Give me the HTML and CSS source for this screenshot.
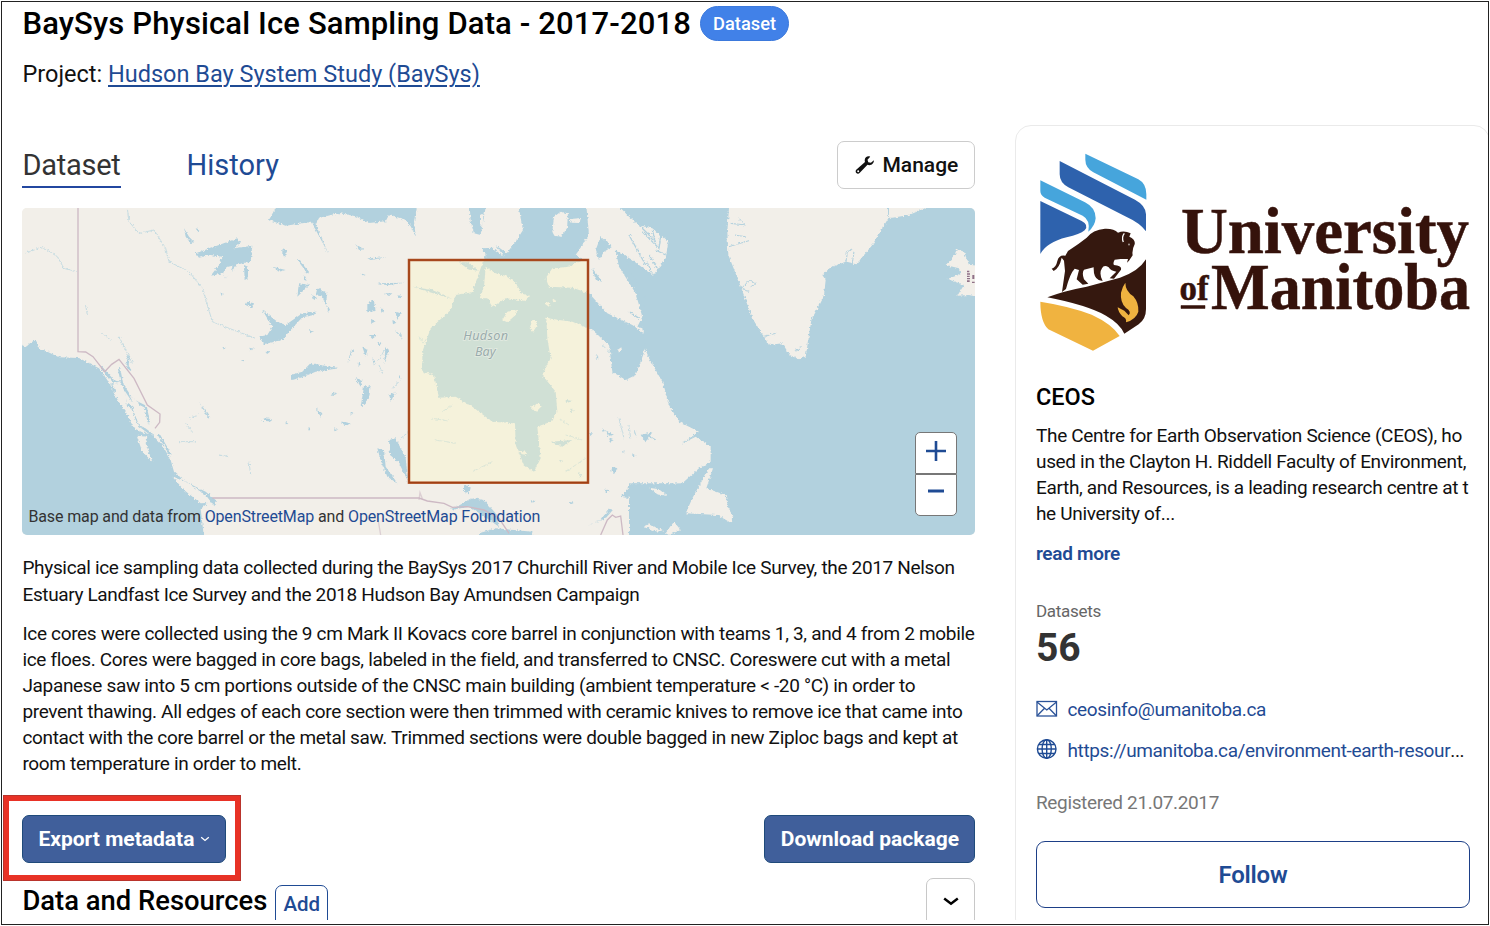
FILE: index.html
```html
<!DOCTYPE html>
<html lang="en">
<head>
<meta charset="utf-8">
<title>BaySys Physical Ice Sampling Data</title>
<link rel="stylesheet" href="styles.css">
</head>
<body>
<div class="frame">
  <div class="viewport">
    <main class="main">
      <div class="title-row">
        <h1>BaySys Physical Ice Sampling Data - 2017-2018</h1>
        <span class="badge">Dataset</span>
      </div>
      <div class="project">Project: <a href="#">Hudson Bay System Study (BaySys)</a></div>
      <div class="tabs">
        <a class="tab active" href="#">Dataset</a>
        <a class="tab" href="#">History</a>
        <button class="btn manage">
          <svg width="20" height="20" viewBox="0 0 20 20"><path d="M18.900 5.200l-3 2.600-2.600-.6-.8-2.500 2.700-3C12.600.6 9.800 2.400 9.700 5.200c0 .7.1 1.300.300 1.800L1.500 14.400c-1.100 1-1.100 2.500-.2 3.500s2.500 1 3.500-.1l7.700-8c3 1.300 6.600-1 6.400-4.600zM3.200 17.200a1 1 0 1 1 0-2 1 1 0 0 1 0 2z" fill="#111" fill-rule="evenodd"/></svg>
          <span>Manage</span>
        </button>
      </div>
      <div class="map">
        <svg class="map-art" viewBox="9 9 2859 981" preserveAspectRatio="none">
          <defs>
            <filter id="coast" x="0" y="0" width="100%" height="100%">
              <feTurbulence type="fractalNoise" baseFrequency="0.14" numOctaves="3" seed="4"/>
              <feDisplacementMap in="SourceGraphic" scale="11" xChannelSelector="R" yChannelSelector="G"/>
            </filter>
          </defs>
          <rect width="2880" height="1000" fill="#f2efe9"/>
          <g filter="url(#coast)">
            <rect x="-60" y="-60" width="3000" height="1120" fill="#f2efe9"/>
            <g class="water">
              <!-- Pacific coast -->
              <path d="M-40 400L20 425 50 403 60 430 85 440 120 457 180 459 205 472 240 490 265 525 285 565 300 592 320 620 345 670 370 682 400 690 430 720 455 765 465 800 500 830 560 860 590 885 590 905 570 890 545 912 560 1040H-40Z"/>
              <path class="inlet" d="M245 485l40 45 25 5 10 60 20 15 20 50 40 30M300 490l10 50 30 45 40 20 10 50M330 450l-5 35 12 10M420 690l35 60M285 560l-5-25"/>
              <!-- Great Bear, Great Slave, Athabasca and northern lakes -->
              <path d="M530 145L600 120 655 100 665 113 645 130 700 122 695 170 655 178 620 220 612 205 575 212 600 180 610 155 575 150 540 158Z"/>
              <path d="M730 315L775 350 800 360 850 325 890 320 885 330 850 337 810 380 790 405 735 418 720 395 745 390 760 365Z"/>
              <path d="M815 510L850 500 875 474 905 480 960 490 890 500 850 517 820 525Z"/>
              <path d="M750 45L785 -20H905L900 38 870 52 800 62Z"/>
              <path d="M870 -20h330l-15 69 5 45-15-30-15-20-50-15-10 20-50 5-40-20-50-10-60 15-10 20 40 90-40-75-25-40Z"/>
              <path d="M495 70l15 25 15 15-10 5-15-20ZM675 180l12 5v35l-10 5ZM685 290l20 5-5 15-20-10ZM790 130l15 5-5 20-10-5ZM735 640l25 3-10 6-20-2ZM540 590l35 50-10-5ZM835 160l35 40-5 5-30-40ZM895 250l30 15-5 35-10-25-20-5ZM840 235l30 5-35 35ZM940 560l15 5-20 8ZM890 610l20 15-5 10ZM760 185l40 10-20 5ZM865 665l10 5-5 8ZM610 425l10 3-5 6ZM605 262l10 5-8 5ZM690 428l15 3-8 6ZM665 465h14l-6 4ZM870 375l15 5-12 5ZM855 210l8 18-8-4ZM880 270l15 10-10 5ZM925 300l8 14-6 6ZM945 670l10 5-8 4ZM970 650l25 5-15 8ZM800 650l8 6-8 2ZM740 440l12 2-8 5ZM530 70l10 3-5 6Z"/>
            </g>
            <g class="river">
              <path d="M325 10l5 40 30 35 45-10 35 55 10 40 60 30 40 50 30 100 50 20 80 30M20 145l50-20 45 30 20 35 35 10M300 395l10 20 30 60M500 655l20 25M480 710h50M690 770l5 40M600 750l30 5M510 640l30-10M200 300l5 30M250 385l25 20"/>
            </g>
            <g class="water" transform="translate(960 0)">
              <!-- Arctic channels and Foxe Basin -->
              <path d="M390 -20H445L425 90 405 85 395 50Z"/>
              <path d="M535 -20H740L750 90 710 150 735 165 690 185 640 190 620 220 630 245 700 248 750 265 805 325 880 360 915 385 920 430 890 510 860 525 820 500 810 420 760 375 700 350 660 345 622 338 625 400 635 460 610 510 650 560 655 620 635 650 595 665 605 760 585 800 555 780 530 720 528 655 460 650 400 605 350 575 300 578 285 510 250 500 250 440 275 370 335 315 350 270 400 262 425 190 440 150 428 130 460 128 495 155 530 110 552 75 545 40Z"/>
              <path d="M360 172h25l35 25-30-3ZM220 245l60 10 60 27-60-18ZM785 95l35 30-25 15-15 25-10-30ZM830 135l50 30 60 45-15 30 5 60-20 70-15-5 15-30-20-70-50-80ZM760 190l30 40-20-5ZM470 120l40 30-15 5Z"/>
              <!-- Winnipeg and western lakes -->
              <path d="M150 705l20-5 30 60 8 70-30-60-25-20ZM115 730l20 5 5 50 35 50-30-20-20-50ZM75 545l20-5-5 40-25 25ZM50 520l20 5-5 20ZM85 295l20-8 5 30-25 5ZM170 320l15 5-10 20ZM140 425l10 10-15 40ZM150 570l20-10-15 30ZM85 160l60-3-50 8ZM115 235l80-2-50 8ZM70 425l15 10-5 20ZM35 440l10-10-20 45ZM135 265h25l-10 8ZM10 650l20 5-15 8ZM50 118l25 15-15 2ZM375 840l20 5-5 20-15-5ZM90 390h25l-15 12ZM185 380l5 25-7-12ZM65 205l15 5-10 4ZM125 305l10 12-8 6ZM100 460l10 10-5 12ZM175 270l15 4-8 6ZM115 410l15 5-10 6ZM60 470l6 12-8 3ZM160 345l12 8-10 5ZM35 620l8 6-8 3ZM95 345l15 4-12 6ZM180 510l8 8-8 3Z"/>
              <!-- Great Lakes -->
              <path d="M335 915l65-35 35 5 35 40 10 40-50-35-40-25ZM420 985l50-15 110 10-5 55H420Z"/>
              <!-- Quebec and Labrador lakes -->
              <path d="M635 710l65-5-30 20ZM695 610l10 8-12 4ZM905 690l35-8-20 30ZM800 675l22 15-15 3ZM820 785l15 5-10 18-8-10ZM880 745l10 8-10 2ZM750 685h12l-8 8ZM660 765l15 3-10 4ZM770 450l12 8-8 3ZM680 585l22 3-20 6ZM800 850l12 10-12 2ZM885 670l8 25-7-10ZM720 800l10 15-8 3ZM690 890l15 4-10 4ZM810 700l14 6-10 4ZM790 670l8 8-8 2ZM850 735l8 6-8 2ZM575 885l16 3-10 5Z"/>
              <!-- Gulf of St Lawrence -->
              <path d="M740 965L785 945 820 900 870 850 880 835H1000V1040L945 985 890 960 888 912 930 887 900 872 850 882 800 940Z"/>
            </g>
            <g class="river">
              <path d="M1100 430l-25 40M1080 480l10 25M1130 380l20 20M1240 640l50 8M1250 705l60 10M1300 600l-30 20M1620 640l30 20M1640 690l50 15M1750 420l30 30M1800 640l15 60M1830 660l5 40M1700 760l-60 40M1170 680l-25 20M1120 550l20-20M1420 770l-60 30M1200 395l15 20"/>
            </g>
            <!-- Atlantic -->
            <path class="water" transform="translate(1890 0)" d="M-85 -30L-85 9 -60 35 -25 62 10 70 58 112 50 160 12 212 -10 200 -45 175 -75 150 -50 210 -10 262 -15 300 -20 370 -12 430 0 460 40 530 60 600 90 650 150 680 95 718 140 695 185 725 185 770 150 790 100 835 0 838 -60 835 -60 1040H1040V-30Z"/>
            <path class="inlet thin" d="M1845 45l60 60M1870 80l50 50M1830 90l50 90M1890 150l25 40M1860 340l-30-20M1885 690l25 15M1900 75l10 40M1925 95l-5 35M1940 150l-30-15M1900 210l-15-40"/>
            <!-- Greenland, Iceland, Newfoundland and islands -->
            <g class="land" transform="translate(1890 0)">
              <path d="M242 -20H715L718 40 670 120 622 178 590 170 545 187 520 210 530 225 525 270 500 320 487 345 470 455 450 463 422 450 400 415 360 420 310 340 270 230 238 150 235 80Z"/>
              <path d="M720 -20V38L730 38 780 30 830 9V-20ZM890 180L915 155 925 133 945 140 960 180 1030 185V285L960 270 925 272 945 240 895 222 935 208 930 190Z"/>
              <path d="M180 790H192L172 850 230 870 238 910 253 935 248 955 205 930 110 925 130 880ZM0 848l30 5 25 20-30-5ZM75 950l20 25-35 15-10-5ZM0 955l25 15 20 5-20 5-40-15Z"/>
              <path d="M-130 870l75 10-50 35-20-5Z"/>
            </g>
            <g class="land" transform="translate(960 0)">
              <path d="M440 185L470 205 500 212 535 240 545 265 570 272 560 288 520 282 500 280 460 306 445 280 420 280 435 245Z"/>
              <path d="M490 345l15-25 30-5-5 15-25 22ZM572 370l8-25 12 0 0 20-10 15ZM615 295l20-5-5 15ZM640 280l12 8-8 4ZM530 735l30 5 5 10-15-2ZM575 605l25-10 5 12-15 15ZM640 80l5-45 20-15 22 5-3 45-18 25-20-3ZM692 42l33-3-5 15-22-1ZM423 30l10-5-2 45-8-10ZM835 435l12-8 2 10-8 8ZM905 380l10-5-2 12ZM700 178l40-12v20l-30 2Z"/>
            </g>
            <path class="land" d="M353 692L385 695 380 715 400 770 370 740ZM460 815L500 830 560 870 578 893 545 895 495 855ZM280 540l25-8 15 35 5 45-20-30ZM340 610l20 5 20 55-20-10ZM330 570l25 20 20 30-25-15ZM612 205l10-18 18-5-5 25-15 12Z"/>
            <path class="fiord" d="M2135 55l45 5-20-20M2130 125l60-18M2170 250l20-25 20 10-15 10M2480 180l5-40 12-5M2500 175l5-35M2145 90l35 5M2230 395l40-10M2325 440l20-12M2170 245l10 12 12 2M2010 880l20-30"/>
          </g>
          <g class="border">
            <path d="M177 9V440L200 441 222 455 257 500 278 478 300 463 345 520 385 600 423 627 422 652 408 670M580 879H1200L1225 888 1275 895 1300 907 1345 905 1395 915 1440 940 1470 985"/>
            <path d="M1745 990L1765 945 1780 930 1790 937 1805 933 1812 990"/>
            <path d="M1200 885l3-22 7 18M1075 930l10 60" opacity=".6"/>
          </g>
          <rect x="1170" y="165" width="537" height="668" fill="#fbf5c8" fill-opacity=".42"/>
          <rect x="1170" y="165" width="537" height="668" fill="none" stroke="#b5542a" stroke-width="7.500"/>
          <rect x="1170" y="165" width="537" height="668" fill="none" stroke="#9a3c10" stroke-width="3"/>
          <g class="place">
            <text x="1333" y="405" textLength="134">Hudson</text>
            <text x="1368" y="452" textLength="62">Bay</text>
          </g>
          <g fill="#77506e"><path d="M2844 197h7v5h-7zM2844 205h9v4h-9zM2844 212h8v4h-8zM2844 219h9v4h-9zM2844 226h8v5h-8zM2860 210h6v12h-6zM2859 230h8v4h-8z" opacity=".8"/></g>
        </svg>
        <div class="credit">Base map and data from <a href="#">OpenStreetMap</a> and <a href="#">OpenStreetMap Foundation</a></div>
        <div class="zoom">
          <button aria-label="Zoom in"><svg width="22" height="22" viewBox="0 0 22 22"><path d="M1 11h20M11 1v20" stroke="#1f4b94" stroke-width="2.600"/></svg></button>
          <button aria-label="Zoom out"><svg width="22" height="22" viewBox="0 0 22 22"><path d="M3 11h16" stroke="#1f4b94" stroke-width="3"/></svg></button>
        </div>
      </div>
      <p class="intro">Physical ice sampling data collected during the BaySys 2017 Churchill River and Mobile Ice Survey, the 2017 Nelson<br><span class="tight">Estuary Landfast Ice Survey and the 2018 Hudson Bay Amundsen Campaign</span></p>
      <p class="details">Ice cores were collected using the 9 cm Mark II Kovacs core barrel in conjunction with teams 1, 3, and 4 from 2 mobile<br>ice floes. Cores were bagged in core bags, labeled in the field, and transferred to CNSC. Coreswere cut with a metal<br>Japanese saw into 5 cm portions outside of the CNSC main building (ambient temperature &lt; -20 °C) in order to<br>prevent thawing. All edges of each core section were then trimmed with ceramic knives to remove ice that came into<br>contact with the core barrel or the metal saw. Trimmed sections were double bagged in new Ziploc bags and kept at<br>room temperature in order to melt.</p>
      <div class="actions">
        <div class="export-wrap">
          <button class="btn primary export">Export metadata <svg width="10" height="6" viewBox="0 0 10 6"><path d="M1.200 1.200L5 4.400 8.800 1.200" fill="none" stroke="#fff" stroke-width="1.300"/></svg></button>
          <span class="highlight"></span>
        </div>
        <button class="btn primary download">Download package</button>
      </div>
      <div class="resources">
        <h2>Data and Resources</h2>
        <button class="add">Add</button>
        <button class="collapse" aria-label="Collapse"><svg width="16" height="9" viewBox="0 0 16 9"><path d="M1.200 1.500L8 6.700 14.800 1.500" fill="none" stroke="#000" stroke-width="2.500"/></svg></button>
      </div>
    </main>
    <aside class="card">
      <svg class="logo" width="434" height="200" viewBox="1036 152 434 200">
        <g transform="translate(1030 145) scale(.33333)">
          <path fill="#46a5dc" d="M166 26L325 103Q349 116 349 148V164L190 82Q166 68 166 44ZM31 106L165 172Q197 188 197 220Q195 243 175 260Q182 225 158 212L44 158Q31 150 31 138Z"/>
          <path fill="#2e62ad" d="M89 48L315 164Q348 182 348 208V259Q330 234 290 216L115 127Q89 113 89 88ZM31 168L155 228Q178 240 164 256Q150 268 110 277Q50 292 31 327Z"/>
          <path fill="#35180f" d="M52 457Q100 438 170 425L270 398Q325 380 348 343V493Q348 522 326 538L283 566Q270 536 228 512Q170 480 52 457ZM96 441L105 378 102 347 95 338Q88 370 71 378L65 371Q78 368 82 348Q87 328 106 332L114 318Q145 298 170 278Q188 254 225 251Q252 250 264 263Q282 255 302 265L298 275Q317 283 314 298Q305 315 308 331L297 347 291 353 294 342 272 342 254 344Q248 354 252 360Q276 362 273 374L252 401 239 400 259 380Q243 378 236 367Q222 357 216 370Q206 385 218 408L206 405Q190 398 191 367L162 374Q155 384 162 403L175 416 158 419 140 403 147 375 134 371Q120 385 108 432Z"/>
          <path fill="#f0b340" d="M31 470Q120 484 185 509Q246 537 269 573L189 617 55 553Q31 530 31 470ZM286 413Q286 438 310 454Q327 474 325 500Q318 523 288 532Q291 520 277 514Q264 500 263 487L283 497 296 511Q306 500 288 489Q270 472 273 443Q277 425 286 413Z"/>
          <path d="M283 265Q274 276 280 291" fill="none" stroke="#fff" stroke-width="4"/>
          <path d="M297 296v5" stroke="#fff" stroke-width="3"/>
        </g>
        <g class="wordmark">
          <text x="1181" y="252.500" font-size="66" textLength="288" lengthAdjust="spacingAndGlyphs">University</text>
          <text x="1179.500" y="300" font-size="35" textLength="29" lengthAdjust="spacingAndGlyphs">of</text>
          <text x="1211" y="309" font-size="66" textLength="259" lengthAdjust="spacingAndGlyphs">Manitoba</text>
          <path d="M1181 305.500h24v3h-24z"/>
        </g>
      </svg>
      <h3>CEOS</h3>
      <p class="about">The Centre for Earth Observation Science (CEOS), ho<br>used in the Clayton H. Riddell Faculty of Environment,<br>Earth, and Resources, is a leading research centre at t<br>he University of...</p>
      <a class="more" href="#">read more</a>
      <div class="stat-label">Datasets</div>
      <div class="stat">56</div>
      <div class="contact">
        <svg width="22" height="18" viewBox="0 0 22 18"><g fill="none" stroke="#2a5298" stroke-width="1.300"><rect x="1" y="1.500" width="19.500" height="14.500"/><path d="M1 2l9.800 8L20.500 2M1.200 15.800l7.300-7.600M20.300 15.800L13 8.200"/></g></svg>
        <a href="#">ceosinfo@umanitoba.ca</a>
      </div>
      <div class="contact web">
        <svg width="22" height="22" viewBox="0 0 22 22"><g fill="none" stroke="#1f4b94" stroke-width="1.400"><circle cx="10.700" cy="10" r="9.300"/><ellipse cx="10.700" cy="10" rx="4.600" ry="9.300"/><path d="M10.700.7v18.600M1.500 10h18.500M3 5.500h15.500M3 14.500h15.500"/></g></svg>
        <a href="#">https://umanitoba.ca/environment-earth-resour</a><span class="dots">...</span>
      </div>
      <div class="registered">Registered 21.07.2017</div>
      <button class="follow">Follow</button>
    </aside>
  </div>
</div>
</body>
</html>
```
FILE: styles.css
```css
* { box-sizing: border-box; }
body { margin: 0; background: #fff; font-family: Roboto, sans-serif; color: #111; }
a { color: #1f4b94; text-decoration: none; }
button { font-family: inherit; padding: 0; margin: 0; background: #fff; }
h1, h2, h3, p { margin: 0; }

.frame { margin: 1px; width: 1488px; height: 924px; border: 1px solid #222; }
.viewport { display: flex; height: 918px; overflow: hidden; }

.main { width: 953px; margin-left: 20.450px; flex: none; }
.title-row { display: flex; align-items: center; height: 42px; }
h1 { font-size: 31px; font-weight: 500; letter-spacing: .14px; white-space: nowrap; color: #000; }
.badge { margin-left: 9px; height: 35px; width: 89px; border-radius: 18px; background: #4181e8; border: 1px solid #3b79dc; color: #fff; font-size: 18.300px; font-weight: 500; line-height: 33px; text-align: center; }
.project { height: 60px; line-height: 60px; font-size: 23.500px; }
.project a { text-decoration: underline; text-decoration-thickness: 2px; text-underline-offset: 3px; }

.tabs { display: flex; height: 48px; margin-top: 37px; }
.tab { font-size: 29px; height: 47px; line-height: 48px; margin-right: 66px; }
.tab.active { color: #333; border-bottom: 2px solid #2347a0; letter-spacing: -.25px; }
.btn { display: flex; align-items: center; justify-content: center; height: 48px; border-radius: 7px; font-size: 21px; }
.manage { width: 138px; margin-left: auto; border: 1px solid #ccc; font-weight: 500; gap: 8px; color: #111; }

.map { position: relative; height: 327px; margin-top: 19px; border-radius: 5px; overflow: hidden; }
.map-art { display: block; width: 953px; height: 327px; }
.water { fill: #b2d1de; }
.land { fill: #f2efe9; }
.inlet { fill: none; stroke: #b2d1de; stroke-width: 7; }
.inlet.thin { stroke-width: 4; }
.fiord { fill: none; stroke: #b2d1de; stroke-width: 3; }
.river { fill: none; stroke: #c6dce2; stroke-width: 3; }
.border { fill: none; stroke: #cdb9c4; stroke-width: 4; }
.place { font-family: "Noto Sans", sans-serif; font-style: italic; font-size: 38px; fill: #9aacac; stroke: #e3ebe2; stroke-width: 5px; paint-order: stroke; }
.credit { position: absolute; left: 6px; bottom: 5px; line-height: 26px; font-size: 16px; letter-spacing: -.13px; white-space: nowrap; color: #333; }
.zoom { position: absolute; right: 18px; top: 224px; width: 42px; display: flex; flex-direction: column; }
.zoom button { display: flex; align-items: center; justify-content: center; height: 42px; border: 1px solid #777; border-radius: 5px 5px 0 0; padding-bottom: 4px; }
.zoom button + button { border-radius: 0 0 5px 5px; padding-bottom: 8px; }

.intro, .details, .about { font-size: 19px; letter-spacing: -.33px; line-height: 26px; white-space: nowrap; }
.intro { margin-top: 20px; line-height: 26.500px; }
.tight { letter-spacing: -.36px; }
.details { margin-top: 13px; }

.actions { display: flex; justify-content: space-between; margin-top: 38px; }
.primary { background: #405f9b; border: 1px solid #1f4a7a; color: #fff; font-weight: 700; }
.export-wrap { position: relative; }
.export { width: 204px; gap: 6px; }
.download { width: 211px; }
.highlight { position: absolute; left: -19px; top: -20px; width: 238px; height: 86px; border: 6px solid #e83226; outline: 1px solid #b9342c; outline-offset: -1px; }

.resources { display: flex; margin-top: 15px; }
h2 { font-size: 27.400px; font-weight: 500; line-height: 46px; white-space: nowrap; color: #000; }
.add { width: 53px; height: 46px; margin: 7px 0 0 8px; padding-bottom: 8px; border: 1px solid #1f4b94; border-radius: 7px; font-size: 20.500px; font-weight: 500; color: #1f4b94; }
.collapse { width: 49px; height: 52px; margin-left: auto; border: 1px solid #c8c8c8; border-radius: 7px; padding-bottom: 6px; }

.card { width: 475px; flex: none; margin: 123px 0 0 39.550px; padding: 26px 19px 0 20px; border: 1px solid #eaeaea; border-radius: 16px; height: 810px; }
.logo { display: block; overflow: visible; }
.wordmark { fill: #35120b; stroke: #35120b; stroke-width: .5px; font-family: "Liberation Serif", serif; font-weight: 700; }
h3 { margin-top: 31px; font-size: 23.500px; font-weight: 500; line-height: 28px; color: #000; }
.about { margin-top: 12px; }
.more { display: block; margin-top: 14px; font-size: 19px; font-weight: 600; line-height: 26px; letter-spacing: -.3px; }
.stat-label { margin-top: 31px; font-size: 17px; line-height: 26px; letter-spacing: -.28px; color: #666; }
.stat { font-size: 39px; font-weight: 700; line-height: 46px; margin-top: 1px; color: #333; }
.contact { display: flex; align-items: center; height: 26px; margin-top: 25px; font-size: 19px; letter-spacing: -.36px; white-space: nowrap; }
.contact.web { margin-top: 15px; }
.contact svg { margin-right: 9.500px; flex: none; }
.dots { color: #111; }
.registered { margin-top: 27px; font-size: 19px; line-height: 26px; letter-spacing: -.35px; color: #777; }
.follow { display: block; width: 434px; height: 67px; margin-top: 25px; border: 1px solid #1d3f87; border-radius: 9px; color: #1f4b94; font-size: 24px; font-weight: 600; letter-spacing: -.2px; }
```
